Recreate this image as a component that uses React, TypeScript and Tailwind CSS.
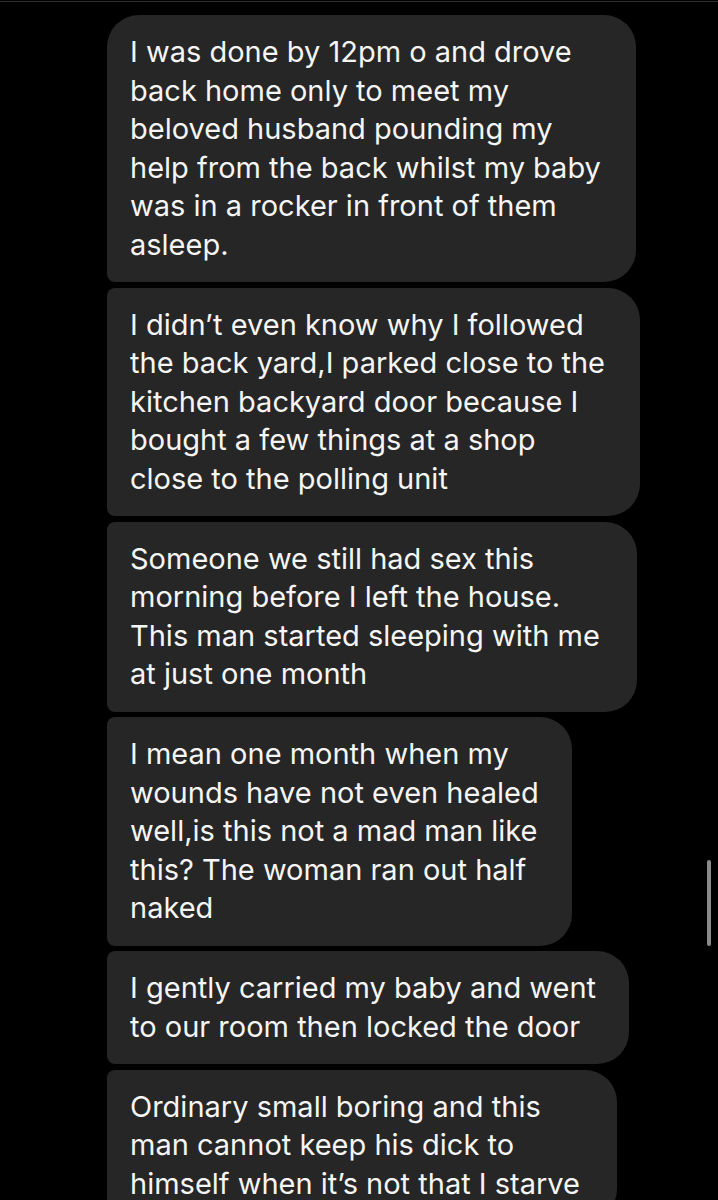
import React from "react";

const messages: { lines: string[]; w: number; first?: boolean }[] = [
  {
    w: 529,
    first: true,
    lines: [
      "I was done by 12pm o and drove",
      "back home only to meet my",
      "beloved husband pounding my",
      "help from the back whilst my baby",
      "was in a rocker in front of them",
      "asleep.",
    ],
  },
  {
    w: 533,
    lines: [
      "I didn’t even know why I followed",
      "the back yard,I parked close to the",
      "kitchen backyard door because I",
      "bought a few things at a shop",
      "close to the polling unit",
    ],
  },
  {
    w: 530,
    lines: [
      "Someone we still had sex this",
      "morning before I left the house.",
      "This man started sleeping with me",
      "at just one month",
    ],
  },
  {
    w: 465,
    lines: [
      "I mean one month when my",
      "wounds have not even healed",
      "well,is this not a mad man like",
      "this? The woman ran out half",
      "naked",
    ],
  },
  {
    w: 522,
    lines: ["I gently carried my baby and went", "to our room then locked the door"],
  },
  {
    w: 510,
    lines: [
      "Ordinary small boring and this",
      "man cannot keep his dick to",
      "himself when it’s not that I starve",
    ],
  },
];

export default function App() {
  return (
    <div
      className="relative h-[1200px] w-[718px] overflow-hidden bg-black"
      style={{ fontFamily: "Inter, 'Noto Sans', sans-serif" }}
    >
      <div className="mt-px h-px w-full bg-[#303030]" />
      <div className="flex flex-col gap-[5.5px] pl-[107px] pt-[13px]">
        {messages.map((m, i) => (
          <div
            key={i}
            className={
              "shrink-0 rounded-r-[32px] bg-[#262626] py-[18px] pl-[23px] pr-4 text-[29px] leading-[38.5px] text-[#f5f5f5] " +
              (m.first ? "rounded-tl-[32px] rounded-bl-[8px]" : "rounded-l-[8px]")
            }
            style={{ width: m.w }}
          >
            {m.lines.map((l, j) => (
              <div key={j} className="whitespace-nowrap">
                {l}
              </div>
            ))}
          </div>
        ))}
      </div>
      <div className="absolute left-[707px] top-[860px] h-[86px] w-[4px] rounded-full bg-[#8a8a8a]" />
    </div>
  );
}
